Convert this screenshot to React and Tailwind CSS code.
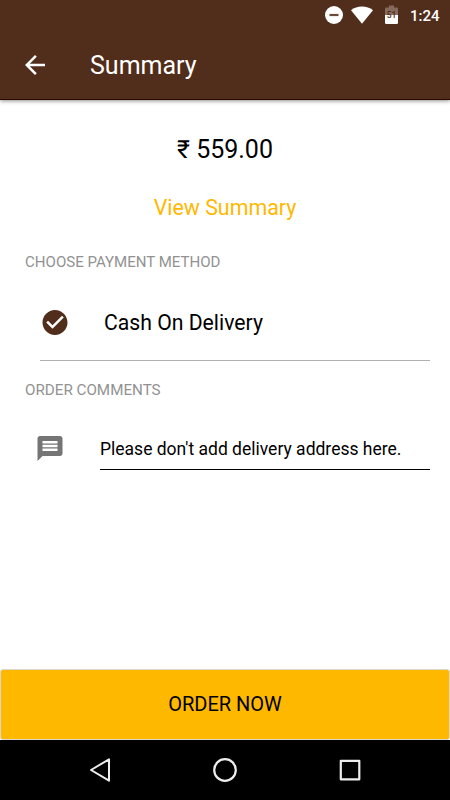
function StatusBar() {
  return (
    <div className="flex h-[30px] items-center pl-[325px] text-white">
      <svg className="h-[18px] w-[18px] shrink-0" viewBox="0 0 18 18">
        <circle cx="9" cy="9" r="9" fill="#fff" />
        <rect x="4.5" y="7.9" width="9" height="2.2" fill="#6b4a3b" />
      </svg>
      <svg className="ml-2 h-[18px] w-[22px] shrink-0" viewBox="0 0 22 18">
        <path d="M11 17.7 0 4.2C3 1.8 6.800.5 11 .5s8 1.300 11 3.700z" fill="#fff" />
      </svg>
      <svg className="ml-3 h-5 w-[13px] shrink-0" viewBox="0 0 13 20">
        <path d="M4 .5h5v2h2.700q1.300 0 1.300 1.300V10H0V3.800Q0 2.500 1.300 2.500H4z" fill="#85695c" />
        <path d="M0 10h13v7.700q0 1.300-1.300 1.300H1.300Q0 19 0 17.700z" fill="#fff" />
        <text x="6.500" y="13" textAnchor="middle" fontSize="8.5" fontWeight="500" fontFamily="Roboto, sans-serif" fill="#512d1b">51</text>
      </svg>
      <span className="mt-[2px] ml-[12px] text-[15px] leading-5 font-medium">1:24</span>
    </div>
  );
}

function AppBar() {
  return (
    <header className="relative h-[100px] shrink-0 border-b border-[#2b0802] bg-[#512d1b] text-white shadow-[0_1px_4px_rgba(0,0,0,0.45)]">
      <StatusBar />
      <div className="flex h-[70px] items-center pl-5">
        <svg className="h-[30px] w-[30px]" viewBox="0 0 24 24" fill="currentColor">
          <path d="M20 11H7.830l5.590-5.590L12 4l-8 8 8 8 1.410-1.410L7.830 13H20v-2z" />
        </svg>
        <h1 className="ml-10 pt-px text-[25px] leading-[30px]">Summary</h1>
      </div>
    </header>
  );
}

function NavigationBar() {
  return (
    <nav className="flex h-[60px] shrink-0 items-center justify-center gap-[95px] bg-black">
      <svg className="h-[30px] w-[30px]" viewBox="0 0 30 30" fill="none" stroke="#ededed" strokeWidth="2" strokeLinejoin="round">
        <path d="M24 4.300v21.400L6 15z" />
      </svg>
      <svg className="h-[30px] w-[30px]" viewBox="0 0 30 30" fill="none" stroke="#ededed" strokeWidth="2.200">
        <circle cx="15" cy="15" r="10.800" />
      </svg>
      <svg className="h-[30px] w-[30px]" viewBox="0 0 30 30" fill="none" stroke="#ededed" strokeWidth="2.200" strokeLinejoin="round">
        <rect x="5.800" y="5.800" width="18.500" height="18.500" />
      </svg>
    </nav>
  );
}

export default function App() {
  return (
    <div className="flex h-[800px] w-[450px] flex-col overflow-hidden bg-white font-[Roboto,sans-serif] text-black">
      <AppBar />
      <main className="flex flex-1 flex-col">
        <p className="mt-[35px] text-center text-[25px] leading-[30px]">₹ 559.00</p>
        <button className="mt-[28px] self-center text-[21.4px] leading-[30px] text-[#ffb800]">View Summary</button>
        <h2 className="mt-[29px] pl-[25px] text-[15.05px] leading-5 text-[#929292]">CHOOSE PAYMENT METHOD</h2>
        <div className="mt-[13px] mr-5 ml-10 flex h-[76px] items-center border-b border-[#b0b0b0]">
          <svg className="h-[30px] w-[30px]" viewBox="0 0.400 24 24" fill="#512d1b">
            <path d="M12 2C6.480 2 2 6.480 2 12s4.480 10 10 10 10-4.480 10-10S17.520 2 12 2zm-2 15-5-5 1.410-1.410L10 14.170l7.590-7.590L19 8l-9 9z" />
          </svg>
          <span className="ml-[34px] text-[21.2px] leading-[30px]">Cash On Delivery</span>
        </div>
        <h2 className="mt-[19px] pl-[25px] text-[15.2px] leading-5 text-[#929292]">ORDER COMMENTS</h2>
        <div className="mt-[28px] mr-5 flex h-[42px] pl-[35px]">
          <svg className="mt-[6px] h-[30px] w-[30px] shrink-0" viewBox="0 0.400 24 24" fill="#757575">
            <path d="M20 2H4c-1.100 0-1.990.900-1.990 2L2 22l4-4h14c1.100 0 2-.900 2-2V4c0-1.100-.900-2-2-2zm-2 12H6v-2h12v2zm0-3H6V9h12v2zm0-3H6V6h12v2z" />
          </svg>
          <div className="ml-[35px] flex flex-1 items-center border-b border-black pt-[2px] text-[17.5px]">
            Please don't add delivery address here.
          </div>
        </div>
      </main>
      <button className="h-[71px] shrink-0 rounded-[3px] border border-[#dcd6cc] bg-[#ffb800] pb-px text-[20px] leading-[30px]">ORDER NOW</button>
      <NavigationBar />
    </div>
  );
}
